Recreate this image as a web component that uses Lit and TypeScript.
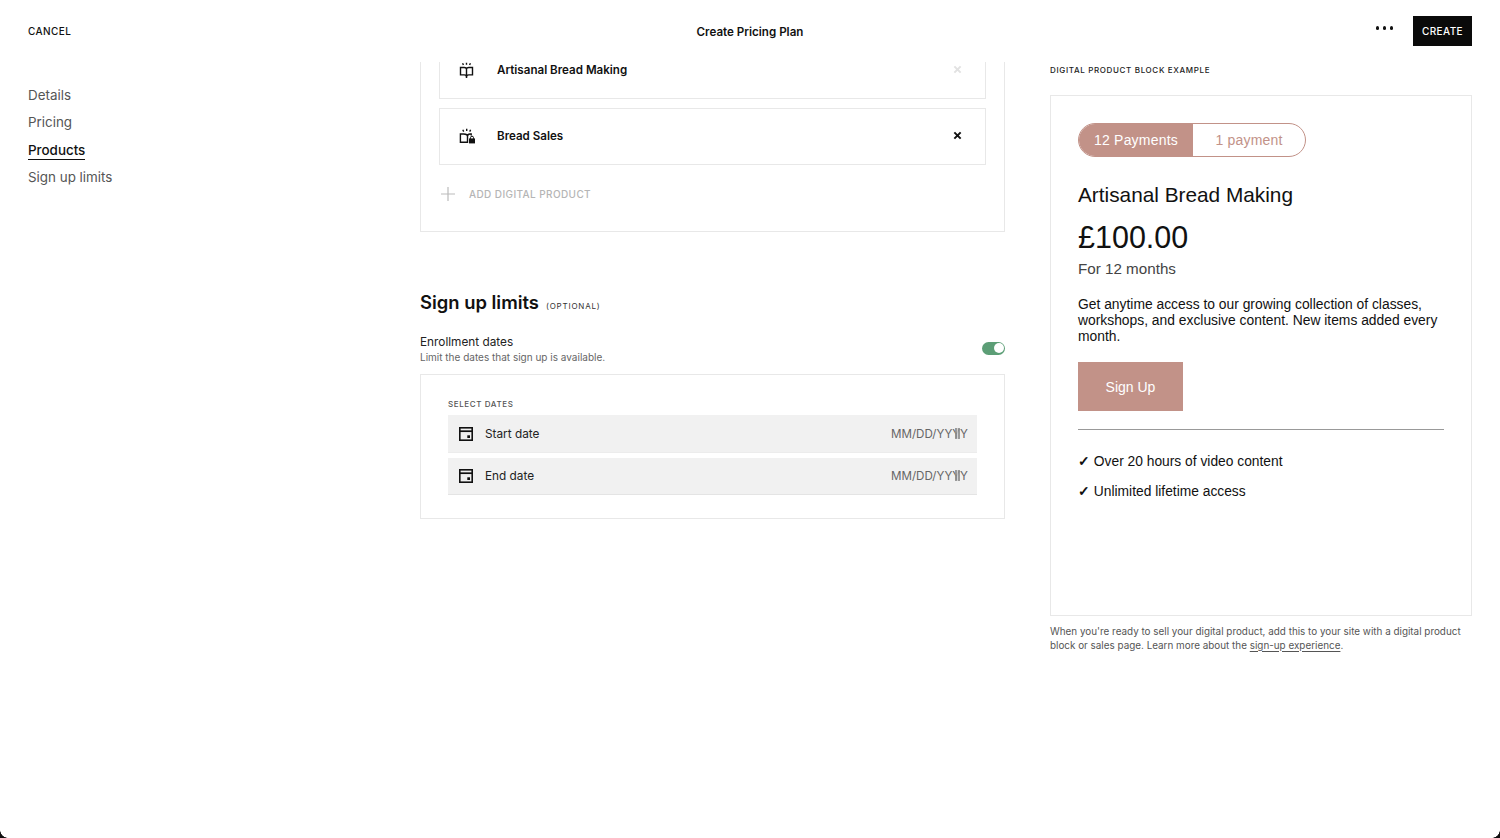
import { LitElement, html, css } from "lit";
import { customElement } from "lit/decorators.js";

const bookIcon = html`<svg class="pi" viewBox="0 0 16 16" fill="none" stroke="#111" stroke-width="1.400">
  <path d="M1.500 5.500h3.600c1.200 0 2.400.6 2.400 1.700v6.800c-.4-.7-1.300-1.100-2.400-1.100H1.500zM13.500 5.500H9.900c-1.200 0-2.400.6-2.400 1.700v6.800c.4-.7 1.300-1.100 2.400-1.100h3.600z"/>
  <path d="M7.500 13.500v1.800" stroke-width="1.400"/>
  <path d="M3.600 1.300l.8 1.700M7.500 .8v2M11.400 1.300l-.8 1.700" stroke-width="1.400"/>
</svg>`;
const lockBookIcon = html`<svg class="pi" viewBox="0 0 16 16" fill="none" stroke="#111" stroke-width="1.400">
  <path d="M8.500 14.300H1.400V6h3.400c1.900 0 3.700.9 3.700 2.400zM8.500 8.400c0-1.500 1-2.400 2.400-2.400h1.300v1.500"/>
  <path d="M3.800 1.800l.9 1.800M7.700 .8v2.300M11.600 1.800l-.9 1.800" stroke-width="1.400"/>
  <rect x="10" y="10.400" width="6" height="5" fill="#111" stroke="none"/>
  <path d="M11.500 10.800V9.700a1.500 1.500 0 0 1 3 0v1.100" stroke-width="1"/>
</svg>`;
const calIcon = html`<svg class="cal" viewBox="0 0 14 14" fill="none">
  <rect x=".8" y=".8" width="12.400" height="12.400" stroke="#111" stroke-width="1.600"/>
  <path d="M1 4.200h12" stroke="#111" stroke-width="1.700"/>
  <rect x="8.300" y="8.300" width="2.700" height="2.700" fill="#111"/>
</svg>`;
const xIcon = (cls: string) => html`<svg class="x ${cls}" viewBox="0 0 10 10" fill="none" stroke-width="2.200"><path d="M1.500 1.500l7 7M8.500 1.500l-7 7"/></svg>`;

@customElement("app-root")
export class AppRoot extends LitElement {
  static styles = css`
    :host { display: block; width: 1500px; height: 838px; overflow: hidden; background: #fff; font-family: Inter, "Liberation Sans", sans-serif; color: #111; position: relative; }
    .top { height: 62px; display: grid; grid-template-columns: 1fr auto 1fr; align-items: center; padding: 0 28px; }
    .cancel { font-size: 10px; font-weight: 500; letter-spacing: .4px; }
    .title { font-size: 11.600px; font-weight: 600; padding-top: 1px; }
    .actions { display: flex; justify-content: flex-end; align-items: center; gap: 20px; }
    .dots { display: flex; gap: 3.500px; margin-top: -6px; }
    .dots i { width: 3.500px; height: 3.500px; border-radius: 50%; background: #111; }
    .create { width: 59px; height: 30px; background: #0a0a0a; color: #fff; font-size: 10px; font-weight: 500; letter-spacing: .4px; display: flex; align-items: center; justify-content: center; }
    .body { display: flex; height: 776px; padding: 0 28px; }
    nav { width: 392px; display: flex; flex-direction: column; align-items: flex-start; gap: 9px; padding-top: 23.900px; font-size: 13.400px; color: #555; }
    nav a { line-height: 18.500px; }
    nav a.on { color: #111; font-weight: 500; box-shadow: 0 1px 0 #111; }
    .mid { width: 585px; }
    .card { border: 1px solid #e8e8e8; }
    .products { border-top: 0; height: 170px; padding: 0 18px; box-sizing: border-box; }
    .prod { border: 1px solid #e8e8e8; display: flex; align-items: center; padding: 0 23px 0 19px; font-size: 11.600px; font-weight: 600; box-sizing: border-box; }
    .prod.a { height: 37px; border-top: 0; padding-bottom: 20px; }
    .prod.a .x { margin-top: -2px; }
    .prod.b { height: 57px; margin-top: 9px; padding-bottom: 2px; }
    .pi { width: 16px; height: 16px; margin-right: 22px; }
    .x { width: 9px; height: 9px; margin-left: auto; }
    .x.dark { stroke: #111; }
    .x.light { stroke: #e2e2e2; }
    .add { display: flex; align-items: center; gap: 12px; margin-top: 20px; color: #b5b5b5; font-size: 10px; font-weight: 500; letter-spacing: .4px; }
    .plus { width: 18px; height: 18px; stroke: #bbb; }
    h2 { margin: 58px 0 0; font-size: 18.400px; line-height: 24px; font-weight: 600; display: flex; align-items: baseline; gap: 7px; }
    h2 small { font-size: 8px; line-height: 1; font-weight: 400; letter-spacing: .8px; color: #333; }
    .row { display: flex; justify-content: space-between; align-items: flex-start; margin-top: 21px; }
    .row b { display: block; font-size: 11.800px; font-weight: 400; line-height: 15px; color: #222; }
    .row span { display: block; font-size: 10px; line-height: 15px; color: #666; }
    .toggle { width: 23px; height: 13px; border-radius: 7px; background: #5c9e76; position: relative; margin-top: 6.500px; }
    .toggle::after { content: ""; position: absolute; right: 1.500px; top: 1.500px; width: 10px; height: 10px; border-radius: 50%; background: #fff; }
    .dates { margin-top: 9px; height: 145px; box-sizing: border-box; padding: 24px 27px 0 27px; }
    .sel { font-size: 8px; line-height: 10px; letter-spacing: .6px; color: #555; font-weight: 500; }
    .date { height: 36px; background: #f1f1f1; border-bottom: 1px solid #e4e4e4; margin-top: 5px; display: flex; align-items: center; padding: 0 9px 0 11px; font-size: 11.800px; color: #222; }
    .date.first { height: 37px; margin-top: 6px; border-bottom: 1px solid #ececec; }
    .cal { width: 14px; height: 14px; margin-right: 12px; }
    .mask { margin-left: auto; font-size: 11.600px; color: #666; position: relative; }
    .mask::after { content: ""; position: absolute; right: 8px; top: 1px; width: 5px; height: 11px; background: repeating-linear-gradient(90deg, #8a8a8a 0 1.500px, #cfcfcf 1.500px 3px); opacity: .85; }
    aside { width: 422px; margin-left: 45px; }
    .eg { font-size: 8px; line-height: 16px; letter-spacing: .65px; font-weight: 500; color: #222; }
    .preview { margin-top: 17px; height: 521px; box-sizing: border-box; padding: 27px 27px 0 27px; font-family: "Liberation Sans", Arial, sans-serif; }
    .tabs { display: inline-flex; height: 34px; border: 1px solid #c29288; border-radius: 17px; overflow: hidden; box-sizing: border-box; font-size: 14px; letter-spacing: .2px; vertical-align: top; }
    .tabs div { display: flex; align-items: center; justify-content: center; }
    .tabs .t1 { width: 114px; background: #c29288; color: #fff; }
    .tabs .t2 { width: 112px; color: #c29288; }
    .pname { font-size: 20.800px; line-height: 26px; margin-top: 25px; }
    .price { font-size: 30.500px; line-height: 38px; margin-top: 10px; }
    .term { font-size: 15.200px; line-height: 20px; margin-top: 3px; color: #444; }
    .desc { font-size: 13.850px; line-height: 16px; margin-top: 17px; }
    .sign { width: 105px; height: 49px; background: #c29288; color: #fff; font-size: 14px; display: flex; align-items: center; justify-content: center; margin-top: 18px; }
    hr { border: 0; border-top: 1px solid #999; margin: 18px 0 0; }
    .check { font-size: 13.800px; line-height: 18px; margin-top: 12px; }
    .check.f { margin-top: 23px; }
    .check strong { font-weight: 700; }
    .foot { font-size: 9.900px; line-height: 13.500px; color: #555; margin-top: 9px; }
    .foot u { text-underline-offset: 2px; }
    .corner { position: absolute; bottom: 0; width: 8px; height: 8px; }
    .corner.l { left: 0; background: radial-gradient(circle at 100% 0, transparent 7.500px, #111 8px); }
    .corner.r { right: 0; background: radial-gradient(circle at 0 0, transparent 7.500px, #111 8px); }
  `;

  render() {
    return html`
      <div class="top">
        <div class="cancel">CANCEL</div>
        <div class="title">Create Pricing Plan</div>
        <div class="actions"><div class="dots"><i></i><i></i><i></i></div><div class="create">CREATE</div></div>
      </div>
      <div class="body">
        <nav><a>Details</a><a>Pricing</a><a class="on">Products</a><a>Sign up limits</a></nav>
        <div class="mid">
          <div class="card products">
            <div class="prod a">${bookIcon}Artisanal Bread Making${xIcon("light")}</div>
            <div class="prod b">${lockBookIcon}Bread Sales${xIcon("dark")}</div>
            <div class="add"><svg class="plus" viewBox="0 0 18 18" fill="none" stroke-width="1.200"><path d="M9 2v14M2 9h14"/></svg>ADD DIGITAL PRODUCT</div>
          </div>
          <h2>Sign up limits <small>(OPTIONAL)</small></h2>
          <div class="row"><div><b>Enrollment dates</b><span>Limit the dates that sign up is available.</span></div><div class="toggle"></div></div>
          <div class="card dates">
            <div class="sel">SELECT DATES</div>
            <div class="date first">${calIcon}Start date<span class="mask">MM/DD/YYYY</span></div>
            <div class="date">${calIcon}End date<span class="mask">MM/DD/YYYY</span></div>
          </div>
        </div>
        <aside>
          <div class="eg">DIGITAL PRODUCT BLOCK EXAMPLE</div>
          <div class="card preview">
            <div class="tabs"><div class="t1">12 Payments</div><div class="t2">1 payment</div></div>
            <div class="pname">Artisanal Bread Making</div>
            <div class="price">£100.00</div>
            <div class="term">For 12 months</div>
            <div class="desc">Get anytime access to our growing collection of classes, workshops, and exclusive content. New items added every month.</div>
            <div class="sign">Sign Up</div>
            <hr />
            <div class="check f"><strong>✓</strong> Over 20 hours of video content</div>
            <div class="check"><strong>✓</strong> Unlimited lifetime access</div>
          </div>
          <div class="foot">When you're ready to sell your digital product, add this to your site with a digital product block or sales page. Learn more about the <u>sign-up experience</u>.</div>
        </aside>
      </div>
      <div class="corner l"></div><div class="corner r"></div>
    `;
  }
}
